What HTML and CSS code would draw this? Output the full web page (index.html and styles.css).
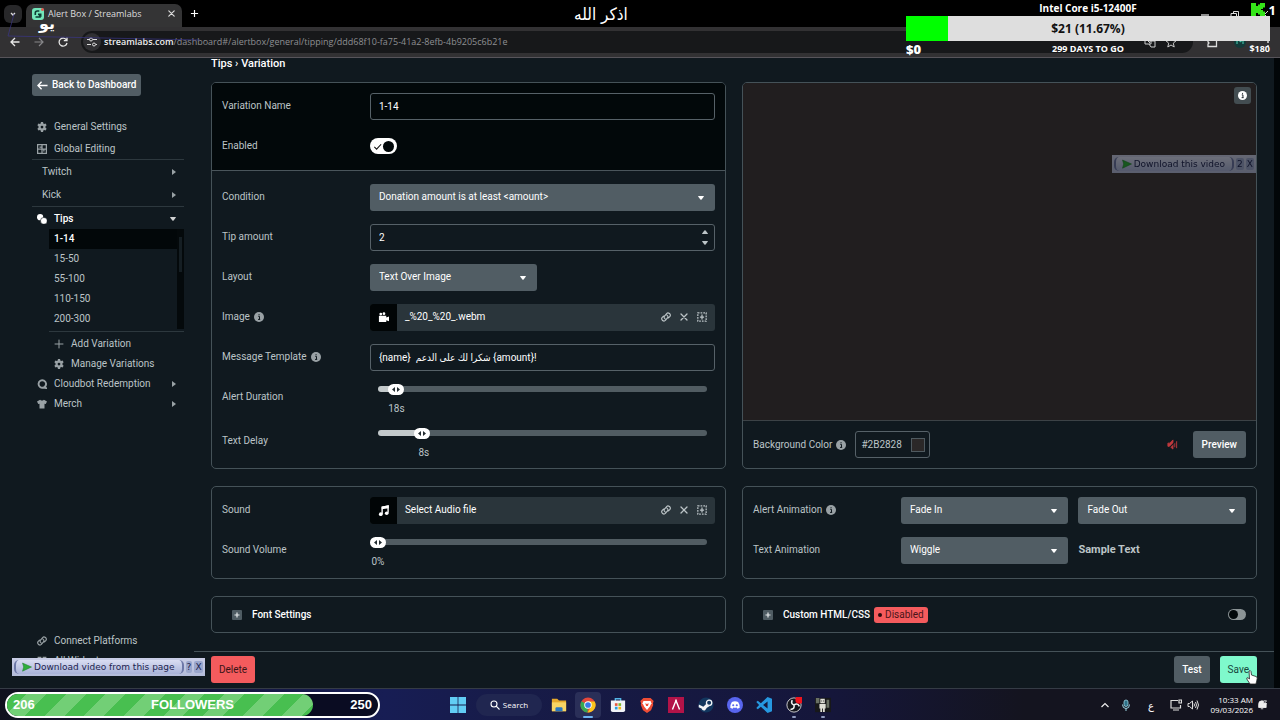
FILE: index.html
```
<!DOCTYPE html>
<html lang="en">
  <head>
    <title>Alert Box / Streamlabs</title>
    <meta charset="utf-8" />
    <link rel="stylesheet" href="styles.css">
  </head>
  <body>
    <!-- shared icons -->
    <svg class="sprite" aria-hidden="true">
      <symbol id="i-caret" viewBox="0 0 6 4"><path d="M.6 0h4.8q.9 0 .3.8L3.600 3.500q-.6.7-1.200 0L.3.800Q-.3 0 .6 0z" /></symbol>
      <symbol id="i-info" viewBox="0 0 10 10"><circle cx="5" cy="5" r="5" fill="currentColor" /><path d="M4.200 4.300h1.300V7.400M4 7.400h2.200M4.500 2.700h1.100" fill="none" stroke="#10191f" /></symbol>
      <symbol id="i-gear" viewBox="0 0 16 16"><path d="M6.300 0h3.400l.4 2.400 1.300.8 2.300-.9 1.700 2.900L13.600 6.800v2.400l1.800 1.600-1.700 2.900-2.300-.9-1.300.8L9.700 16H6.300l-.4-2.400-1.300-.8-2.300.9-1.700-2.900 1.800-1.600V6.800L.6 5.200l1.700-2.900 2.300.9 1.300-.8zM8 5.800a2.200 2.200 0 100 4.400 2.200 2.200 0 000-4.400z" fill-rule="evenodd" /></symbol>
      <symbol id="i-link" viewBox="0 0 16 16"><path d="M6.500 11q-3-2.500-.5-5l3-3.500q2-2 4.500 0t.8 4.500L12 9.500M9.500 5q3 2.500.5 5l-3 3.500q-2 2-4.500 0T1.700 9L4 6.500" fill="none" stroke="currentColor" stroke-width="1.800" stroke-linecap="round" /></symbol>
      <symbol id="i-close" viewBox="0 0 10 10"><path d="M2 2l6 6M8 2L2 8" fill="none" stroke="currentColor" stroke-width="1.300" stroke-linecap="round" /></symbol>
      <symbol id="i-media" viewBox="0 0 12 12"><rect x="1" y="1" width="10" height="10" fill="none" stroke="currentColor" stroke-width="1.500" stroke-dasharray="2 1.300" /><path d="M6 3v6M3.500 6h5" stroke="currentColor" stroke-width="1.500" /></symbol>
      <symbol id="i-plusbox" viewBox="0 0 10 10"><rect width="10" height="10" rx="1" fill="#4f5c63" /><path d="M5 2.500v5M2.500 5h5" stroke="#e6eaec" stroke-width="1.200" /></symbol>
      <symbol id="i-play" viewBox="0 0 10 10"><path d="M.5 1l9 4-9 4.200 1.200-4.200z" fill="#2fae3c" stroke="#1c7a2a" stroke-width=".5" /></symbol>
    </svg>

    <header class="browser">
      <div class="tabstrip">
        <button class="tab-search" aria-label="Search tabs"><svg viewBox="0 0 10 10"><path d="M3 4l2 2 2-2" fill="none" stroke="#ddd" stroke-width="1.300" /></svg></button>
        <div class="tab">
          <svg class="favicon" viewBox="0 0 12 12"><rect width="12" height="12" rx="3" fill="#73e6ba" /><path d="M3.500 9h4.500V6.500M3.300 7V5q0-2 2-2h2" fill="none" stroke="#0c3b33" stroke-width="1.600" /><path d="M6 7V5.500h3.500V9z" fill="#0c3b33" /><circle cx="10.500" cy="1.500" r="1.500" fill="#e05a50" /></svg>
          <span>Alert Box / Streamlabs</span>
          <button aria-label="Close tab"><svg viewBox="0 0 10 10"><use href="#i-close" /></svg></button>
        </div>
        <button class="new-tab" aria-label="New tab"><svg viewBox="0 0 10 10"><path d="M5 1v8M1 5h8" stroke="#fff" stroke-width="1.300" /></svg></button>
        <div class="window-buttons">
          <svg viewBox="0 0 10 10"><path d="M1 6h8" stroke="#ddd" stroke-width="1.300" /></svg>
          <svg viewBox="0 0 10 10"><path d="M1 9V4.500h5.500V9zM3.500 4V2.500h5V7" fill="none" stroke="#ddd" /></svg>
          <svg viewBox="0 0 10 10"><path d="M1 2l7 7M8 2L1 9" stroke="#ddd" /></svg>
        </div>
      </div>
      <div class="toolbar">
        <button aria-label="Back"><svg viewBox="0 0 12 12"><path d="M10.500 6h-8M6 2L2 6l4 4" fill="none" stroke="#e8e8e8" stroke-width="1.300" /></svg></button>
        <button aria-label="Forward"><svg viewBox="0 0 12 12"><path d="M1.500 6h8M6 2l4 4-4 4" fill="none" stroke="#87878a" stroke-width="1.200" /></svg></button>
        <button aria-label="Reload"><svg viewBox="0 0 12 12"><path d="M9.500 4A4 4 0 1010 7M10 1.500v3.200H6.800" fill="none" stroke="#e8e8e8" stroke-width="1.300" /></svg></button>
        <div class="address">
          <span class="site-info"><svg viewBox="0 0 12 12"><path d="M1 3.500h3M7 3.500h4M1 8.500h4M10 8.500h1" stroke="#ddd" stroke-width="1.100" /><circle cx="5" cy="3.500" r="1.500" fill="none" stroke="#ddd" /><circle cx="8" cy="8.500" r="1.500" fill="none" stroke="#ddd" /></svg></span>
          <span class="url"><b>streamlabs.com</b>/dashboard#/alertbox/general/tipping/ddd68f10-fa75-41a2-8efb-4b9205c6b21e</span>
          <svg class="page-action" viewBox="0 0 12 12"><path d="M1 2h6v6H1zM5 5h6v6H7L5 8M3 4l3 3" fill="none" stroke="#ccc" /></svg>
          <svg class="page-action" viewBox="0 0 12 12"><path d="M6 1l1.500 3.500 3.500.3-2.700 2.400.9 3.800L6 9l-3.200 2 .9-3.800L1 4.800l3.500-.3z" fill="none" stroke="#ccc" /></svg>
        </div>
        <div class="extensions">
          <svg viewBox="0 0 12 12"><path d="M2 10.500V8l1-1-1-1V3.500h3V2h3v1.500h2.500v7z" fill="none" stroke="#ddd" stroke-width="1.300" /></svg>
          <svg viewBox="0 0 12 12"><circle cx="6" cy="6" r="6" fill="#123b3a" /><path d="M3 8V5l3-2v3l3-2v4" fill="none" stroke="#4bd0b0" /></svg>
          <svg viewBox="0 0 12 12"><circle cx="6" cy="2" r="1" fill="#ddd" /><circle cx="6" cy="6" r="1" fill="#ddd" /><circle cx="6" cy="10" r="1" fill="#ddd" /></svg>
        </div>
      </div>
    </header>

    <div class="app">
      <nav class="sidebar">
        <button class="btn back"><svg viewBox="0 0 12 12"><path d="M11.500 6H1M5 2L1 6l4 4" fill="none" stroke="currentColor" stroke-width="1.600" /></svg>Back to Dashboard</button>
        <ul class="menu">
          <li><a href="#"><svg class="icon"><use href="#i-gear" /></svg>General Settings</a></li>
          <li class="line"><a href="#"><svg class="icon" viewBox="0 0 16 16"><path d="M1 1h14v14H1zM8 1v14M1 8h14M4 5h4M11 8v4" fill="none" stroke="currentColor" stroke-width="2" /></svg>Global Editing</a></li>
          <li class="platform"><a href="#">Twitch<svg class="arrow" viewBox="0 0 4 6"><path d="M0 0l4 3-4 3z" /></svg></a></li>
          <li class="platform line"><a href="#">Kick<svg class="arrow" viewBox="0 0 4 6"><path d="M0 0l4 3-4 3z" /></svg></a></li>
          <li><a href="#" class="active"><svg class="icon" viewBox="0 0 16 16"><circle cx="5" cy="5" r="5" /><circle cx="11" cy="11" r="5.500" stroke="#10191f" /></svg>Tips<svg class="arrow down"><use href="#i-caret" /></svg></a></li>
        </ul>
        <div class="variations">
          <ul>
            <li><a href="#" class="active">1-14</a></li>
            <li><a href="#">15-50</a></li>
            <li><a href="#">55-100</a></li>
            <li><a href="#">110-150</a></li>
            <li><a href="#">200-300</a></li>
          </ul>
          <div class="list-scroll"><span></span></div>
        </div>
        <ul class="menu short">
          <li class="sub"><a href="#"><svg class="icon" viewBox="0 0 16 16"><path d="M8 1v14M1 8h14" stroke="currentColor" stroke-width="1.600" /></svg>Add Variation</a></li>
          <li class="sub"><a href="#"><svg class="icon"><use href="#i-gear" /></svg>Manage Variations</a></li>
          <li><a href="#"><svg class="icon" viewBox="0 0 16 16"><path d="M12.500 12.500a6 6 0 10-2 1.200L14.500 14.500z" fill="none" stroke="currentColor" stroke-width="3" /></svg>Cloudbot Redemption<svg class="arrow" viewBox="0 0 4 6"><path d="M0 0l4 3-4 3z" /></svg></a></li>
          <li><a href="#"><svg class="icon" viewBox="0 0 16 16"><path d="M5 1q3 3 6 0l5 3-2 4-2-.5V15H4V7.500L2 8 0 4z" /></svg>Merch<svg class="arrow" viewBox="0 0 4 6"><path d="M0 0l4 3-4 3z" /></svg></a></li>
        </ul>
        <ul class="menu short bottom">
          <li><a href="#"><svg class="icon"><use href="#i-link" /></svg>Connect Platforms</a></li>
          <li><a href="#"><svg class="icon" viewBox="0 0 16 16"><path d="M1 1h6v6H1zM9 1h6v6H9zM1 9h6v6H1zM9 9h6v6H9z" /></svg>All Widgets</a></li>
        </ul>
      </nav>

      <main class="content">
        <h1>Tips › Variation</h1>
        <form class="settings" id="variation">
          <section class="panel general">
            <div class="panel-head">
              <div class="row">
                <label for="name">Variation Name</label>
                <input class="text" id="name" type="text" value="1-14" />
              </div>
              <div class="row">
                <label for="enabled">Enabled</label>
                <span class="switch">
                  <input id="enabled" type="checkbox" checked />
                  <svg viewBox="0 0 10 10"><path d="M1.500 5.500L4 8l5-5.500" fill="none" stroke="#111" stroke-width="1.200" /></svg>
                </span>
              </div>
            </div>
            <div class="panel-body">
              <div class="row">
                <label for="condition">Condition</label>
                <span class="select"><select id="condition"><option>Donation amount is at least &lt;amount&gt;</option></select><svg><use href="#i-caret" /></svg></span>
              </div>
              <div class="row">
                <label for="amount">Tip amount</label>
                <span class="stepper">
                  <input class="text" id="amount" type="number" value="2" />
                  <span class="steps"><svg class="up"><use href="#i-caret" /></svg><svg><use href="#i-caret" /></svg></span>
                </span>
              </div>
              <div class="row">
                <label for="layout">Layout</label>
                <span class="select half"><select id="layout"><option>Text Over Image</option></select><svg><use href="#i-caret" /></svg></span>
              </div>
              <div class="row">
                <span class="label">Image <svg class="info"><use href="#i-info" /></svg></span>
                <div class="file">
                  <span class="file-type"><svg viewBox="0 0 12 12"><circle cx="3" cy="2.200" r="1.500" /><circle cx="6.500" cy="1.800" r="1.500" /><path d="M1 4h8v2l3-1v5l-3-1v2H1z" /></svg></span>
                  <span class="file-name">_%20_%20_.webm</span>
                  <button type="button" aria-label="Link"><svg><use href="#i-link" /></svg></button>
                  <button type="button" aria-label="Remove"><svg><use href="#i-close" /></svg></button>
                  <button type="button" aria-label="Gallery"><svg><use href="#i-media" /></svg></button>
                </div>
              </div>
              <div class="row">
                <label for="template">Message Template <svg class="info"><use href="#i-info" /></svg></label>
                <input class="text" id="template" type="text" value="{name}  شكرا لك على الدعم {amount}!" />
              </div>
              <div class="row tall">
                <label for="duration">Alert Duration</label>
                <div class="slider" style="--fill: 5.37%">
                  <input id="duration" type="range" min="2" max="300" value="18" />
                  <output>18s</output>
                </div>
              </div>
              <div class="row tall">
                <label for="delay">Text Delay</label>
                <div class="slider" style="--fill: 13.33%">
                  <input id="delay" type="range" min="0" max="60" value="8" />
                  <output>8s</output>
                </div>
              </div>
            </div>
          </section>

          <section class="panel preview">
            <div class="stage">
              <button type="button" class="stage-info" aria-label="Info"><svg><use href="#i-info" /></svg></button>
              <div class="grabber dimmed">
                <button type="button"><svg><use href="#i-play" /></svg>Download this video</button>
                <span>2</span><span>X</span>
              </div>
            </div>
            <div class="preview-foot">
              <label for="bg">Background Color <svg class="info"><use href="#i-info" /></svg></label>
              <span class="color"><input id="bg" type="text" value="#2B2828" /><i></i></span>
              <svg class="muted" viewBox="0 0 12 12"><path d="M1 4.500h2L6.500 1v10L3 8H1zM8.500 4v5M10.500 2v8" fill="#c0393d" stroke="#c0393d" /><path d="M.5 11.500l11-11" stroke="#10191f" stroke-width="1.200" /></svg>
              <button type="button" class="btn">Preview</button>
            </div>
          </section>

          <section class="panel sound">
            <div class="row">
              <span class="label">Sound</span>
              <div class="file">
                <span class="file-type"><svg viewBox="0 0 12 12"><path d="M4.500 10V2.500L11 1v7.500" fill="none" stroke="#fff" stroke-width="1.500" /><path d="M4 1.500L11.700.5v3L4 4.500z" /><circle cx="3" cy="10" r="2" /><circle cx="9.500" cy="9" r="2" /></svg></span>
                <span class="file-name">Select Audio file</span>
                <button type="button" aria-label="Link"><svg><use href="#i-link" /></svg></button>
                <button type="button" aria-label="Remove"><svg><use href="#i-close" /></svg></button>
                <button type="button" aria-label="Gallery"><svg><use href="#i-media" /></svg></button>
              </div>
            </div>
            <div class="row tall">
              <label for="volume">Sound Volume</label>
              <div class="slider" style="--fill: 0%">
                <input id="volume" type="range" min="0" max="100" value="0" />
                <output>0%</output>
              </div>
            </div>
          </section>

          <section class="panel animation">
            <div class="row">
              <label for="anim-in">Alert Animation <svg class="info"><use href="#i-info" /></svg></label>
              <div class="pair">
                <span class="select"><select id="anim-in"><option>Fade In</option></select><svg><use href="#i-caret" /></svg></span>
                <span class="select"><select aria-label="Exit animation"><option>Fade Out</option></select><svg><use href="#i-caret" /></svg></span>
              </div>
            </div>
            <div class="row">
              <label for="anim-text">Text Animation</label>
              <div class="pair">
                <span class="select"><select id="anim-text"><option>Wiggle</option></select><svg><use href="#i-caret" /></svg></span>
                <strong class="sample">Sample Text</strong>
              </div>
            </div>
          </section>

          <section class="panel fold">
            <svg><use href="#i-plusbox" /></svg>
            <h2>Font Settings</h2>
          </section>

          <section class="panel fold">
            <svg><use href="#i-plusbox" /></svg>
            <h2><label for="custom">Custom HTML/CSS</label></h2>
            <span class="tag">Disabled</span>
            <span class="switch off"><input id="custom" type="checkbox" /></span>
          </section>
        </form>

        <footer class="actions">
          <button class="btn danger">Delete</button>
          <button class="btn test">Test</button>
          <button class="btn save">Save</button>
        </footer>
      </main>
      <div class="page-scroll"></div>
    </div>

    <div class="taskbar">
      <div class="followers">
        <div class="followers-fill"></div>
        <span>206</span><span>FOLLOWERS</span><span>250</span>
      </div>
      <svg class="start" viewBox="0 0 16 16"><path d="M0 0h7.600v7.600H0zM8.400 0H16v7.600H8.400zM0 8.400h7.600V16H0zM8.400 8.400H16V16H8.400z" fill="#62cdf4" /></svg>
      <button class="search"><svg viewBox="0 0 10 10"><circle cx="4" cy="4" r="3" fill="none" stroke="#fff" stroke-width="1.100" /><path d="M6.200 6.200L9.500 9.500" stroke="#fff" stroke-width="1.100" /></svg>Search</button>
      <div class="apps">
        <span><svg viewBox="0 0 18 18"><path d="M1 2h6l2 2h8v12H1z" fill="#e6a92c" /><path d="M1 6h16v10H1z" fill="#f8d564" /><path d="M5 16v-3q0-1.500 1.500-1.500h5Q13 11.500 13 13v3z" fill="#2877c0" /></svg></span>
        <span class="running focus"><svg viewBox="0 0 18 18"><circle cx="9" cy="9" r="8.500" fill="#e5473a" /><path d="M9 9l-7.400-4.200A8.500 8.500 0 008.500 17.500z" fill="#36a853" /><path d="M9 5h7.500a8.500 8.500 0 01-8 12.500L12.500 11z" fill="#f9c51c" /><circle cx="9" cy="9" r="4.200" fill="#fff" /><circle cx="9" cy="9" r="3.200" fill="#3978e6" /></svg></span>
        <span><svg viewBox="0 0 18 18"><path d="M6 5V2h6v3" fill="none" stroke="#54b6e6" stroke-width="1.500" /><path d="M1 4h16v11q0 2-2 2H3q-2 0-2-2z" fill="#f1f3f8" /><path d="M5.500 7H8.500v3h-3z" fill="#e8583c" /><path d="M9.500 7h3v3h-3z" fill="#7ab82d" /><path d="M5.500 11H8.500v3h-3z" fill="#28a0e0" /><path d="M9.500 11h3v3h-3z" fill="#f2b71c" /></svg></span>
        <span><svg viewBox="0 0 18 18"><path d="M5 1h8l3.500 3.500-.8 2.500.3 2-2.500 6L9 18l-4.500-3L2 9l.3-2-.8-2.500z" fill="#ef4d35" /><path d="M5 4.500h8L14 7l-2 4-3 3.500L6 11 4 7z" fill="#fff" /><path d="M7 7l2 1 2-1-1 3H8z" fill="#ef4d35" /></svg></span>
        <span><svg viewBox="0 0 18 18"><path d="M0 0h18v18H0z" fill="#b31348" /><path d="M5 14L9 4l4 10M8 4h2" fill="none" stroke="#fff" stroke-width="1.600" /></svg></span>
        <span><svg viewBox="0 0 18 18"><circle cx="9" cy="9" r="8.500" fill="#12365e" /><path d="M1 8.500L6 11l4-4 5 2-5 3-2 3q-3 1-4-2l-3.300-1.500z" fill="#f2f4f7" /><circle cx="12.500" cy="6.500" r="3" fill="#12365e" stroke="#f2f4f7" stroke-width="1.500" /></svg></span>
        <span><svg viewBox="0 0 18 18"><circle cx="9" cy="9" r="9" fill="#5966ef" /><path d="M5.500 5.500Q9 4 12.500 5.500q2 3 1.800 6.500l-2.500 1.200-1-1.300q-1.800.4-3.600 0l-1 1.300L3.700 12q-.2-3.500 1.800-6.500z" fill="#fff" /><circle cx="7" cy="9.300" r="1.200" fill="#5966ef" /><circle cx="11" cy="9.300" r="1.200" fill="#5966ef" /></svg></span>
        <span><svg viewBox="0 0 18 18"><path d="M13 0l5 2v14l-5 2L5.500 11 2 13.700.300 12.500 3.500 9 .300 5.500 2 4.300 5.500 7zM13 5L8 9l5 4z" fill="#2698e0" fill-rule="evenodd" /></svg></span>
        <span class="running"><svg viewBox="0 0 18 18"><circle cx="9" cy="9" r="8" fill="#15161d" stroke="#ddd" /><path d="M9 9q-4-1-2-5.500M9 9q4-3 6 1.500M9 9q1 5-4 5" fill="none" stroke="#eee" stroke-width="1.800" /><circle cx="15" cy="3" r="4.500" fill="#f0141e" /></svg></span>
        <span class="running"><svg viewBox="0 0 18 18"><path d="M0 1h18v16H0z" fill="#17181a" /><path d="M1 1h4v6H1zM13 3h3v9h-3z" fill="#697064" /><path d="M6 2h5v5H6zM5 8h7v5H5zM6 13h2v4H6zM9 13h2v4H9z" fill="#deded6" /><path d="M7 4h1v1H7zM9 4h1v1H9z" fill="#333" /></svg></span>
      </div>
      <div class="tray">
        <svg viewBox="0 0 12 12"><path d="M2.500 8L6 4.500 9.500 8" fill="none" stroke="#eee" stroke-width="1.200" /></svg>
        <svg class="mic" viewBox="0 0 12 12"><rect x="4" y="1" width="4" height="6.500" rx="2" fill="#2c6f86" stroke="#9bd3e2" stroke-width=".8" /><path d="M2.500 5.500q0 4 3.500 4t3.500-4M6 9.500V12" fill="none" stroke="#9bd3e2" /></svg>
        <span class="lang">ع</span>
        <svg viewBox="0 0 12 12"><path d="M8 1.500H1v7.500h9.500V6M3 11h6M9 1h2.500v3H9z" fill="none" stroke="#ddd" stroke-width="1.200" /></svg>
        <svg class="speaker" viewBox="0 0 12 12"><path d="M1 4.500h1.500L5.500 2v8L2.500 7.500H1zM7 4.500q1 1.500 0 3M8.500 3q2 3 0 6M10 1.500q3 4.500 0 9" fill="none" stroke="#ddd" /></svg>
        <time>10:33 AM<br />09/03/2026</time>
        <svg class="bell" viewBox="0 0 12 12"><path d="M2 9V5q0-4 4-4l2 .5V4h3v5zM4.500 10.500h3" fill="#eee" stroke="#eee" /><path d="M8 1h3.500L8.500 4.500H12" fill="none" stroke="#eee" /></svg>
      </div>
    </div>

    <!-- stream overlays -->
    <div class="overlay dhikr" lang="ar" dir="rtl">اذكر الله</div>
    <div class="overlay tag-ar" lang="ar">يو</div>
    <svg class="overlay scribble" viewBox="0 0 200 50"><path d="M14 14L8 36l192 4" fill="none" stroke="#3a3688" stroke-opacity=".7" /></svg>
    <div class="overlay goal">
      <div class="cpu">Intel Core i5-12400F</div>
      <div class="goal-bar"><div class="goal-fill" style="width: 11.67%"></div><span>$21 (11.67%)</span></div>
      <div class="goal-foot"><b>$0</b><span>299 DAYS TO GO</span><span>$180</span></div>
    </div>
    <div class="overlay rank"><svg viewBox="0 0 14 13"><path d="M0 0h5v3h2V1.500h2V0h5v4.500h-2V6h-2v1h2v1.500h2V13H9v-1.500H7V10H5v3H0z" fill="#35e519" /></svg>1</div>
    <div class="overlay grabber page-grabber">
      <button><svg><use href="#i-play" /></svg>Download video from this page</button>
      <span>?</span><span>X</span>
    </div>
    <svg class="overlay cursor" viewBox="0 0 12 15"><path d="M3 1q1.500-1 2 .5L5.500 5l4.500 1.500q1.500.5 1.200 2L10 14H4L.8 9q-.3-1.500 1-1.300L3.500 9z" fill="#fff" stroke="#222" stroke-width=".8" /></svg>
  </body>
</html>
```

FILE: styles.css
```
* {
  box-sizing: border-box;
}

body {
  margin: 0;
  height: 100vh;
  display: flex;
  flex-direction: column;
  position: relative;
  overflow: hidden;
  background: #10191f;
  color: #bcc4c7;
  font-family: Roboto, "DejaVu Sans Condensed", sans-serif;
  font-size: 10px;
  line-height: 12px;
}

button,
input,
select {
  font: inherit;
  color: inherit;
  margin: 0;
  padding: 0;
  border: 0;
  background: none;
}

ul {
  list-style: none;
  margin: 0;
  padding: 0;
}

a {
  color: inherit;
  text-decoration: none;
}

svg {
  display: block;
  flex: none;
  fill: currentColor;
}

.sprite {
  position: absolute;
  width: 0;
  height: 0;
}

/* browser */
.browser {
  background: #000;
  color: #ddd;
  font-family: "Open Sans", sans-serif;
}

.tabstrip {
  display: flex;
  align-items: center;
  height: 27px;
  padding-left: 4px;
}

.tab-search {
  width: 18px;
  height: 18px;
  padding: 4px;
  border-radius: 6px;
  background: #28282a;
}

.tab {
  display: flex;
  align-items: center;
  gap: 4px;
  align-self: flex-end;
  width: 156px;
  height: 23px;
  margin-left: 4px;
  padding: 0 6px 4px;
  border-radius: 7px 7px 0 0;
  background: #343435;
  font-size: 9px;
}

.favicon {
  width: 12px;
  height: 12px;
}

.tab button {
  margin-left: auto;
}

.tab button svg,
.new-tab svg {
  width: 9px;
  height: 9px;
}

.new-tab {
  margin-left: 8px;
}

.window-buttons {
  display: flex;
  gap: 20px;
  margin-left: auto;
  padding-right: 10px;
}

.window-buttons svg {
  width: 10px;
  height: 10px;
}

.toolbar {
  display: flex;
  align-items: center;
  gap: 12px;
  height: 31px;
  padding: 0 6px 0 9px;
  background: #323133;
  border-bottom: 1px solid #57545a;
}

.toolbar > button svg {
  width: 12px;
  height: 12px;
}

.address {
  display: flex;
  align-items: center;
  flex: 1;
  gap: 3px;
  height: 22px;
  padding: 0 16px 0 2px;
  border-radius: 11px;
  background: #17181a;
}

.site-info {
  padding: 3px;
  border-radius: 50%;
  background: #303033;
}

.site-info svg,
.page-action,
.extensions svg {
  width: 12px;
  height: 12px;
}

.page-action {
  margin-left: 6px;
}

.url {
  flex: 1;
  color: #8e8f92;
  font-size: 9px;
}

.url b {
  color: #eee;
  font-weight: 600;
}

.extensions {
  display: flex;
  gap: 16px;
  padding-left: 1px;
}

/* page */
.app {
  flex: 1;
  min-height: 0;
  display: flex;
  border-bottom: 1px solid #353b45;
}

.sidebar {
  display: flex;
  flex-direction: column;
  width: 194px;
  padding: 16px 10px 0 32px;
}

.btn {
  height: 27px;
  padding: 0 9px;
  border-radius: 3px;
  background: #515d64;
  color: #fff;
  font-weight: 500;
}

.back {
  display: flex;
  align-items: center;
  align-self: flex-start;
  gap: 4px;
  height: 22px;
  margin-bottom: 19px;
  padding: 0 5px;
}

.back svg {
  width: 11px;
  height: 11px;
}

.menu a {
  display: flex;
  align-items: center;
  gap: 7px;
  height: 22px;
  padding: 1px 8px 0 5px;
}

.menu .icon {
  width: 10px;
  height: 10px;
  opacity: 0.8;
}

.menu .line {
  border-bottom: 1px solid #2d383e;
}

.platform a {
  height: 23px;
  padding-left: 10px;
}

.menu .active,
.variations .active {
  color: #fff;
  font-weight: 500;
}

.menu .active .icon {
  opacity: 1;
}

.arrow {
  width: 4px;
  height: 6px;
  margin-left: auto;
  opacity: 0.8;
}

.arrow.down {
  width: 6px;
  height: 4px;
}

.variations {
  display: flex;
  height: 103px;
  margin-left: 17px;
  padding-bottom: 2px;
  border-bottom: 1px solid #2d383e;
}

.variations ul {
  flex: 1;
}

.variations a {
  display: block;
  height: 20px;
  padding-left: 5px;
  line-height: 19px;
}

.variations .active {
  background: #020709;
}

.list-scroll {
  width: 7px;
  padding: 8px 2px;
  background: #04090b;
}

.list-scroll span {
  display: block;
  height: 35px;
  background: #151e23;
}

.short {
  padding-top: 1px;
}

.short a {
  height: 20px;
}

.short .sub a {
  padding-left: 22px;
}

.bottom {
  margin-top: auto;
  padding-bottom: 18px;
}

.content {
  flex: 1;
  min-width: 0;
  display: flex;
  flex-direction: column;
}

h1 {
  margin: 0;
  padding: 0 17px;
  color: #fff;
  font-size: 11px;
  font-weight: 500;
  line-height: 12px;
}

.settings {
  flex: 1;
  display: grid;
  grid-template-columns: 1fr 1fr;
  align-content: start;
  gap: 17px 16px;
  padding: 12px 17px 0;
}

.panel {
  min-width: 0;
  border: 1px solid #455258;
  border-radius: 5px;
  overflow: hidden;
}

.panel-head {
  padding: 3px 10px 4px;
  background: #02080a;
  border-bottom: 1px solid #4a555b;
}

.panel-body {
  padding: 6px 10px 3px;
}

.row {
  display: grid;
  grid-template-columns: 30% 1fr;
  align-items: center;
  height: 40px;
}

.row label,
.row .label,
.preview-foot label {
  display: flex;
  align-items: center;
  gap: 4px;
}

.info {
  width: 10px;
  height: 10px;
  opacity: 0.8;
}

.text {
  width: 100%;
  height: 27px;
  padding: 0 8px;
  border: 1px solid #566168;
  border-radius: 3px;
  color: #fff;
}

.text::-webkit-inner-spin-button {
  display: none;
}

.select {
  position: relative;
  display: block;
}

.half {
  width: calc(50% - 5px);
}

.select select {
  width: 100%;
  height: 27px;
  padding: 0 24px 1px 9px;
  border-radius: 3px;
  background: #515d64;
  color: #fff;
  appearance: none;
}

.select svg {
  position: absolute;
  right: 11px;
  top: 12px;
  width: 6px;
  height: 4px;
  color: #fff;
}

.stepper {
  position: relative;
}

.steps {
  position: absolute;
  right: 7px;
  top: 6px;
  display: grid;
  gap: 7px;
}

.steps svg {
  width: 6px;
  height: 4px;
}

.steps .up {
  transform: rotate(180deg);
}

.file {
  display: flex;
  align-items: center;
  gap: 8px;
  height: 27px;
  padding-right: 8px;
  border-radius: 3px;
  background: #2a353b;
  overflow: hidden;
}

.file-type {
  display: grid;
  place-items: center;
  width: 27px;
  height: 27px;
  background: #010506;
  color: #fff;
}

.file-type svg {
  width: 11px;
  height: 11px;
}

.file-name {
  flex: 1;
  color: #fff;
}

.file button svg {
  width: 10px;
  height: 10px;
}

.switch {
  position: relative;
  width: 27px;
  height: 16px;
}

.switch input {
  display: block;
  width: 100%;
  height: 100%;
  border-radius: 8px;
  background: #fff;
  appearance: none;
}

.switch input::after {
  content: "";
  display: block;
  width: 11px;
  height: 11px;
  border-radius: 50%;
  background: #02080a;
  position: absolute;
  right: 3px;
  top: 3px;
}

.switch svg {
  position: absolute;
  left: 3px;
  top: 4px;
  width: 9px;
  height: 9px;
}

.tall {
  height: 44px;
  align-items: start;
  line-height: 40px;
}

.slider {
  position: relative;
  padding: 6px 0 0;
  line-height: 12px;
}

.slider::before {
  content: "";
  position: absolute;
  left: 8px;
  right: 8px;
  top: 9px;
  height: 6px;
  border-radius: 3px;
  background: linear-gradient(#c3c9cb, #c3c9cb) 0 0 / var(--fill) 100% no-repeat #515c62;
}

.slider input {
  position: relative;
  display: block;
  width: 100%;
  height: 12px;
  appearance: none;
}

.slider input::-webkit-slider-thumb {
  width: 16px;
  height: 11px;
  border-radius: 6px;
  background: #fff url("data:image/svg+xml,%3Csvg xmlns='http://www.w3.org/2000/svg' viewBox='0 0 16 11'%3E%3Cpath d='M7 3v5L4 5.500zM9 3v5l3-2.500z' fill='%23222c31'/%3E%3C/svg%3E") center / 16px 11px no-repeat;
  appearance: none;
}

.slider output {
  display: block;
  width: 32px;
  margin: 8px 0 0 calc(var(--fill) - 8px);
  text-align: center;
}

.preview {
  display: flex;
  flex-direction: column;
}

.stage {
  position: relative;
  flex: 1;
  background: #211e1f;
  border-bottom: 1px solid #3c4246;
}

.stage-info {
  position: absolute;
  right: 5px;
  top: 4px;
  padding: 4px;
  border-radius: 3px;
  background: #434d51;
  color: #fff;
}

.stage-info svg {
  width: 9px;
  height: 9px;
}

.preview-foot {
  display: flex;
  align-items: center;
  height: 47px;
  padding: 0 10px;
}

.color {
  display: flex;
  align-items: center;
  width: 75px;
  height: 27px;
  margin-left: 9px;
  padding: 0 4px 0 5px;
  border: 1px solid #566168;
  border-radius: 3px;
}

.color input {
  flex: 1;
  min-width: 0;
}

.color i {
  width: 14px;
  height: 14px;
  border: 1px solid #4f5a60;
  background: #2b2828;
}

.muted {
  width: 11px;
  height: 11px;
  margin: 0 15px 0 auto;
}

.sound,
.animation {
  padding: 3px 10px 4px;
}

.pair {
  display: grid;
  grid-template-columns: 1fr 1fr;
  align-items: center;
  gap: 10px;
}

.sample {
  font-size: 11px;
}

.fold {
  display: flex;
  align-items: center;
  height: 37px;
  padding: 0 10px 0 20px;
}

.fold > svg {
  width: 10px;
  height: 10px;
  margin-right: 10px;
}

h2 {
  margin: 0;
  color: #fff;
  font-size: 10px;
  font-weight: 500;
}

.tag {
  margin-left: 4px;
  padding: 2px 4px;
  border-radius: 3px;
  background: #f45b5d;
  color: #4b1519;
}

.tag::before {
  content: "";
  display: inline-block;
  width: 4px;
  height: 4px;
  margin-right: 3px;
  border-radius: 50%;
  background: #2a0a0c;
  vertical-align: middle;
}

.off {
  width: 18px;
  height: 11px;
  margin-left: auto;
}

.off input {
  background: #8b9395;
}

.off input::after {
  width: 9px;
  height: 9px;
  left: 1px;
  top: 1px;
}

.actions {
  display: flex;
  align-items: center;
  gap: 10px;
  height: 37px;
  padding: 0 17px 1px;
  border-top: 1px solid #455258;
}

.actions .btn {
  padding: 0 8px;
}

.actions .danger {
  margin-right: auto;
  background: #f45b5d;
  color: #3b1417;
  font-weight: 400;
}

.actions .save {
  background: #7ff9cc;
  color: #17473c;
  font-weight: 400;
}

.page-scroll {
  width: 6px;
  background: #020608;
}

/* taskbar */
.taskbar {
  display: flex;
  align-items: center;
  height: 31px;
  padding: 0 13px 0 5px;
  background: linear-gradient(90deg, #10101e 0%, #171d54 30%, #171b48 40%, #15163a 65%, #14141f 80%);
  color: #fff;
  font-family: "Open Sans", "DejaVu Sans", sans-serif;
}

.followers {
  position: relative;
  display: flex;
  align-items: center;
  justify-content: space-between;
  width: 375px;
  height: 26px;
  padding: 0 6px;
  border: 2px solid #fff;
  border-radius: 13px;
  overflow: hidden;
  background: #0a0c22;
  font: bold 13px "Liberation Sans", sans-serif;
}

.followers span {
  position: relative;
}

.followers-fill {
  position: absolute;
  left: 0;
  top: 0;
  bottom: 0;
  width: 82.4%;
  border-radius: 0 11px 11px 0;
  background: repeating-linear-gradient(135deg, #48bf50 0 14px, #72cf76 14px 28px);
}

.start {
  width: 16px;
  height: 16px;
  margin: 0 10px 0 70px;
}

.search {
  display: flex;
  align-items: center;
  justify-content: center;
  gap: 3px;
  width: 66px;
  height: 22px;
  border-radius: 11px;
  background: #202650;
  font-size: 8px;
}

.search svg {
  width: 10px;
  height: 10px;
}

.apps {
  display: flex;
  justify-content: space-between;
  width: 290px;
  margin-left: 4px;
}

.apps span {
  position: relative;
  padding: 5px;
  border-radius: 4px;
}

.apps svg {
  width: 16px;
  height: 16px;
}

.apps .focus {
  background: #2a2f58;
}

.running::after {
  content: "";
  position: absolute;
  left: 50%;
  bottom: 0;
  width: 4px;
  height: 2px;
  margin-left: -2px;
  border-radius: 1px;
  background: #8f9abf;
}

.focus::after {
  width: 10px;
  margin-left: -5px;
  background: #6db4f2;
}

.tray {
  display: flex;
  align-items: center;
  margin-left: auto;
}

.tray svg {
  width: 12px;
  height: 12px;
}

.tray .mic {
  margin-left: 9px;
}

.lang {
  margin: 0 16px;
}

.tray .speaker {
  margin-left: 5px;
}

.tray time {
  width: 50px;
  margin: 0 4px;
  font-size: 8px;
  line-height: 10px;
  text-align: right;
}

.tray .bell {
  width: 10px;
  height: 10px;
}

/* overlays */
.overlay {
  position: absolute;
  color: #fff;
}

.dhikr {
  left: 574px;
  top: 2px;
  font: 17px/24px "DejaVu Sans Condensed", sans-serif;
}

.tag-ar {
  left: 39px;
  top: 14px;
  font: bold 16px/20px "DejaVu Sans", sans-serif;
}

.scribble {
  left: 0;
  top: 0;
  width: 200px;
  height: 50px;
}

.goal {
  right: 10px;
  top: 0;
  width: 364px;
  font-family: "Open Sans", sans-serif;
  font-weight: 700;
}

.cpu {
  height: 16px;
  font-size: 10px;
  line-height: 16px;
  text-align: center;
}

.goal-bar {
  position: relative;
  height: 25px;
  background: #dedede;
  color: #111;
  font-size: 12px;
  line-height: 25px;
  text-align: center;
}

.goal-bar span {
  position: relative;
}

.goal-fill {
  position: absolute;
  height: 100%;
  background: #0f0;
}

.goal-foot {
  display: grid;
  grid-template-columns: 1fr auto 1fr;
  align-items: center;
  height: 16px;
  font-size: 9px;
}

.goal-foot b {
  font-size: 13px;
}

.goal-foot span:last-child {
  text-align: right;
}

.rank {
  right: 4px;
  top: 3px;
  display: flex;
  gap: 4px;
  font: bold 13px/14px "Open Sans", sans-serif;
}

.rank svg {
  width: 14px;
  height: 13px;
}

.grabber {
  display: flex;
  align-items: center;
  gap: 2px;
  height: 18px;
  padding: 0 2px;
  background: linear-gradient(#c9cde6, #b4bcda);
  color: #1c2350;
  font: 9px/12px "DejaVu Sans", sans-serif;
}

.grabber button {
  display: flex;
  align-items: center;
  gap: 2px;
  height: 14px;
  padding: 0 7px 0 6px;
  border: 1px solid #6d78a8;
  border-width: 0 2px;
  border-radius: 5px;
  background: linear-gradient(#d9ddf2, #a9b3d8);
}

.grabber svg {
  width: 10px;
  height: 10px;
}

.grabber span {
  padding: 0 1px;
  border-radius: 2px;
  background: #9aa6cc;
}

.dimmed {
  position: absolute;
  right: 0;
  top: 72px;
  filter: brightness(0.5);
}

.page-grabber {
  left: 12px;
  top: 658px;
}

.cursor {
  left: 1246px;
  top: 670px;
  width: 12px;
  height: 15px;
}
```
